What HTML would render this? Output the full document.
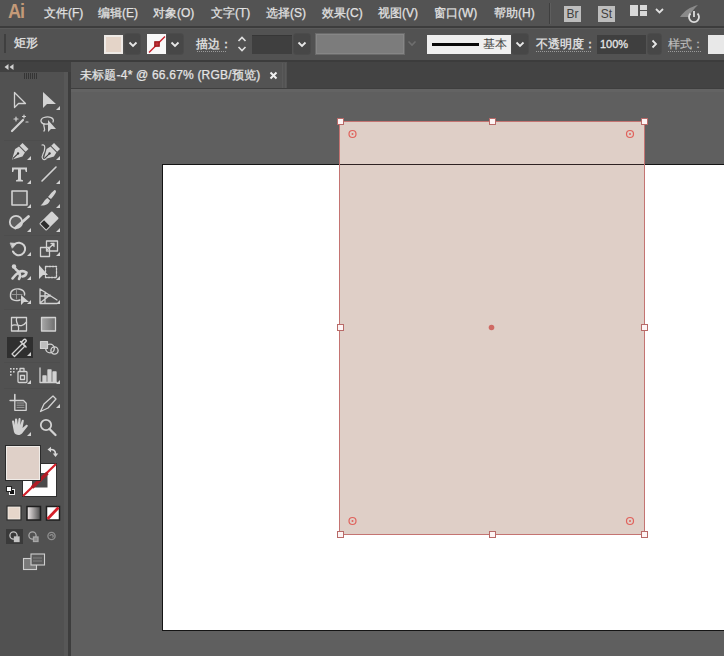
<!DOCTYPE html>
<html><head><meta charset="utf-8">
<style>
*{margin:0;padding:0;box-sizing:border-box}
html,body{width:724px;height:656px;overflow:hidden;background:#5f5f5f;font-family:"Liberation Sans",sans-serif;}
.a{position:absolute}
#menubar{left:0;top:0;width:724px;height:26px;background:#535353}
#mline{left:0;top:26px;width:724px;height:2px;background:#3c3c3c}
#mline2{left:0;top:28px;width:724px;height:1px;background:#5a5a5a}
#ctrl{left:0;top:29px;width:724px;height:31px;background:#525252}
#cline{left:0;top:60px;width:724px;height:2px;background:#3c3c3c}
.mi{position:absolute;top:4.5px;font-size:12px;color:#e2e2e2;line-height:17px;white-space:nowrap;-webkit-text-stroke:0.25px #e2e2e2}
.ct{position:absolute;font-size:12px;color:#e6e6e6;line-height:16px;white-space:nowrap;-webkit-text-stroke:0.3px currentColor}
#tools{left:0;top:62px;width:64px;height:594px;background:#515151}
#thead{left:0;top:62px;width:71px;height:10px;background:#414141}
#tedge{left:64px;top:72px;width:4px;height:584px;background:#575757}
#tdark{left:68px;top:72px;width:3px;height:584px;background:#3d3d3d}
#tabstrip{left:71px;top:62px;width:653px;height:27px;background:#434343}
#tab{left:71px;top:62px;width:216px;height:26px;background:#535353}
#artboard{left:162px;top:164px;width:600px;height:467px;background:#fff;border:1px solid #141414}
#rect{left:339px;top:121px;width:306px;height:414px;background:#dfcfc7;border:1px solid #c47472}
.h{position:absolute;width:7px;height:7px;background:#fdf4f4;border:1px solid #b86a68}
.dd{position:absolute;width:15px;height:20px;background:#474747;border-radius:3px;box-shadow:0 0 0 1px #4b4b4b}
svg{position:absolute;overflow:visible}
</style></head><body>
<div id="menubar" class="a"></div>
<div id="mline" class="a"></div>
<div id="mline2" class="a"></div>
<div id="ctrl" class="a"></div>
<div id="cline" class="a"></div>

<!-- menu -->
<div class="a" style="left:8px;top:1px;font-size:20px;font-weight:bold;color:#c49a78;line-height:20px;letter-spacing:-1px;transform:scaleX(0.9);transform-origin:left">Ai</div>
<div class="mi" style="left:44px">文件(F)</div>
<div class="mi" style="left:98px">编辑(E)</div>
<div class="mi" style="left:153px">对象(O)</div>
<div class="mi" style="left:211px">文字(T)</div>
<div class="mi" style="left:266px">选择(S)</div>
<div class="mi" style="left:322px">效果(C)</div>
<div class="mi" style="left:378px">视图(V)</div>
<div class="mi" style="left:434px">窗口(W)</div>
<div class="mi" style="left:494px">帮助(H)</div>
<div class="a" style="left:549px;top:3px;width:1px;height:21px;background:#3f3f3f"></div>
<div class="a" style="left:550px;top:3px;width:1px;height:21px;background:#5e5e5e"></div>
<div class="a" style="left:564px;top:6px;width:17px;height:16px;background:#bdbdbd;color:#404040;font-size:12px;line-height:16px;text-align:center">Br</div>
<div class="a" style="left:598px;top:6px;width:17px;height:16px;background:#bdbdbd;color:#404040;font-size:12px;line-height:16px;text-align:center">St</div>
<svg style="left:630px;top:5px" width="18" height="12"><rect x="0" y="0" width="8" height="11" fill="#d8d8d8"/><rect x="10" y="0" width="7" height="5" fill="#d8d8d8"/><rect x="10" y="6" width="7" height="5" fill="#d8d8d8"/></svg>
<svg style="left:655px;top:8px" width="9" height="6"><path d="M1 1 L4.5 4.5 L8 1" stroke="#e0e0e0" stroke-width="1.8" fill="none"/></svg>
<svg style="left:678px;top:3px" width="26" height="22"><path d="M2 14 C6 8 12 4 20 2 C16 6 13 9 11 14 Z" fill="#8a8a8a"/><path d="M12.5 10.5 A5 5 0 1 0 19.5 10.5" stroke="#dcdcdc" stroke-width="1.8" fill="none"/><path d="M16 8 V14" stroke="#dcdcdc" stroke-width="1.8"/></svg>

<!-- control bar -->
<div class="a" style="left:4px;top:34px;width:2px;height:19px;background:#3f3f3f"></div>
<div class="ct" style="left:14px;top:35px">矩形</div>
<div class="a" style="left:104px;top:35px;width:19px;height:19px;background:#e4d4c8;border:2px solid #eeeae6"></div>
<div class="dd" style="left:125px;top:34px"></div>
<svg style="left:128px;top:41px" width="10" height="7"><path d="M1.5 1.5 L5 5 L8.5 1.5" stroke="#e8e8e8" stroke-width="1.8" fill="none"/></svg>
<svg style="left:147px;top:34px" width="20" height="20"><rect x="0" y="0" width="19" height="20" fill="#f8f8f8"/><path d="M2 18.5 L18 2.5" stroke="#c8202c" stroke-width="1.5"/><rect x="7.8" y="7.8" width="4.4" height="4.4" fill="#c03038" stroke="#9a1418" stroke-width="1.2"/></svg>
<div class="dd" style="left:167px;top:34px;width:16px"></div>
<svg style="left:170px;top:41px" width="10" height="7"><path d="M1.5 1.5 L5 5 L8.5 1.5" stroke="#e8e8e8" stroke-width="1.8" fill="none"/></svg>
<div class="ct" style="left:196px;top:36px">描边：</div>
<svg style="left:236px;top:36px" width="12" height="16"><path d="M2.5 5 L6 1.5 L9.5 5" stroke="#e0e0e0" stroke-width="1.6" fill="none"/><path d="M2.5 11 L6 14.5 L9.5 11" stroke="#e0e0e0" stroke-width="1.6" fill="none"/></svg>
<div class="a" style="left:252px;top:35px;width:40px;height:19px;background:#3f3f3f;border-top:1px solid #363636"></div>
<div class="dd" style="left:294px;top:34px;width:16px"></div>
<svg style="left:297px;top:41px" width="10" height="7"><path d="M1.5 1.5 L5 5 L8.5 1.5" stroke="#e8e8e8" stroke-width="1.8" fill="none"/></svg>
<div class="a" style="left:315px;top:33px;width:90px;height:22px;background:#7c7c7c;border:1px solid #6a6a6a;box-shadow:inset 0 0 0 1px #868686"></div>
<svg style="left:407px;top:40px" width="10" height="7"><path d="M1.5 1.5 L5 5 L8.5 1.5" stroke="#6e6e6e" stroke-width="1.6" fill="none"/></svg>
<div class="a" style="left:427px;top:35px;width:84px;height:19px;background:#efefef"></div>
<div class="a" style="left:432px;top:43px;width:47px;height:3px;background:#0a0a0a"></div>
<div class="a" style="left:483px;top:36px;font-size:12px;color:#444;line-height:16px">基本</div>
<div class="dd" style="left:512px;top:34px;width:16px"></div>
<svg style="left:515px;top:41px" width="10" height="7"><path d="M1.5 1.5 L5 5 L8.5 1.5" stroke="#e8e8e8" stroke-width="1.8" fill="none"/></svg>
<div class="ct" style="left:536px;top:36px">不透明度：</div>
<div class="a" style="left:597px;top:35px;width:49px;height:19px;background:#3f3f3f"></div>
<div class="ct" style="left:600px;top:36px;font-size:11px;color:#e6e6e6">100%</div>
<div class="dd" style="left:648px;top:34px;width:13px"></div>
<svg style="left:651px;top:39px" width="7" height="10"><path d="M1.5 1.5 L5 5 L1.5 8.5" stroke="#e8e8e8" stroke-width="1.8" fill="none"/></svg>
<div class="ct" style="left:668px;top:36px;color:#bdbdbd;-webkit-text-stroke:0.2px #bdbdbd">样式：</div>
<div class="a" style="left:708px;top:35px;width:20px;height:19px;background:#e8e8e8"></div>

<svg style="left:0;top:0" width="724" height="60"><g stroke="#9a9a9a" stroke-width="1" stroke-dasharray="1 1"><path d="M197 51.5 H227"/><path d="M536 51.5 H592"/><path d="M668 51.5 H702"/></g></svg>
<!-- tools panel -->
<div id="tools" class="a"></div>
<div id="thead" class="a"></div>
<div id="tedge" class="a"></div>
<div id="tdark" class="a"></div>
<svg style="left:4px;top:64px" width="10" height="6"><path d="M4.5 0 L0.5 3 L4.5 6 Z M9.5 0 L5.5 3 L9.5 6 Z" fill="#d0d0d0"/></svg>
<svg style="left:24px;top:73px" width="17" height="6"><path d="M0.5 0 V6 M2.5 0 V6 M4.5 0 V6 M6.5 0 V6 M8.5 0 V6 M10.5 0 V6 M12.5 0 V6" stroke="#353535" stroke-width="1"/></svg>


<!-- tool icons -->
<svg style="left:0;top:0" width="66" height="656">
<g fill="none" stroke="#d2d2d2" stroke-width="1.3" stroke-linejoin="round" stroke-linecap="round">
 <!-- selection outline -->
 <path d="M14.5 92.5 L14.5 107.5 L18.5 103.5 L25.5 103.5 Z"/>
 <!-- magic wand -->
 <path d="M12 131 L23 120" stroke-width="2.2"/>
 <path d="M16 117 V121 M14 119 H18 M24 115 V118 M22.5 116.5 H25.5 M26 122 H28" stroke-width="1.2"/>
 <!-- lasso -->
 <path d="M48 124 C40 125 39 119 44 117.5 C49 116 55 118 53 122"/>
 <path d="M44 124 C43 127 46 129 44 131"/>
 <!-- curvature pen curve -->
 <path d="M42 145 C46 144 45 150 43 154 C41 158 43 161 46 159" stroke-width="1.2"/>
 <!-- line -->
 <path d="M42 181 L56 167" stroke-width="1.6"/>
 <!-- rectangle -->
 <rect x="12" y="191" width="15" height="14" fill="#5c5c5c" stroke-width="1.6"/>
 <!-- shaper -->
 <circle cx="16" cy="222" r="6.2" stroke-width="1.8" fill="#5e5e5e"/>
 <path d="M15.5 228 L28.5 216.5" stroke-width="2.8"/>
 <!-- rotate -->
 <path d="M14.5 244.3 A6.3 6.3 0 1 1 13 251.5" stroke-width="2"/>
 <path d="M10.5 243 L16.5 243.5 L12.5 248 Z" fill="#d2d2d2" stroke-width="0.8"/>
 <!-- scale -->
 <rect x="40.5" y="247.5" width="9" height="9" stroke-width="1.3"/>
 <rect x="46.5" y="241" width="11" height="10" stroke-width="1.3"/>
 <path d="M47 250 L54 243.5 M51 243.5 H54 V246.5" stroke-width="1.3"/>
 <!-- warp -->
 <g stroke="#d2d2d2" stroke-width="2.6" stroke-linecap="round" fill="none"><path d="M13.5 266.5 Q16 270 19 272 Q23 270 26.5 272.5 Q26 276 22.5 276.5 M19 272 Q15 275 12.5 278.5 M19 272 Q21 276 19 279"/></g>
 <circle cx="14" cy="266.5" r="2.2" fill="#d2d2d2" stroke="none"/>
 <!-- free transform -->
 <rect x="45.5" y="266.5" width="11" height="11" stroke-dasharray="2 1.2"/>
 <!-- perspective grid -->
 <path d="M40 289 V303.5 H57 M40 289 L57 300 M40 296 H50 M45 292 V303.5 M40 303 L50 295"/>
 <!-- mesh -->
 <rect x="11.5" y="317.5" width="15" height="13.5"/>
 <path d="M11.5 326 C16 322 20 330 26.5 322 M17 317.5 C14 322 21 326 18 331"/>
 <!-- gradient box -->
 <rect x="41.5" y="317.5" width="14" height="13.5" fill="url(#gr)"/>
 <!-- blend -->
 <circle cx="50" cy="348.5" r="4.3"/><circle cx="54.5" cy="350.5" r="3.6"/>
 <!-- symbol sprayer -->
 <rect x="18" y="371.5" width="9" height="11" rx="1"/>
 <rect x="20.5" y="375.5" width="4" height="4"/>
 <path d="M20 371.5 V368.5 H24 V371.5"/>
 <!-- column graph -->
 <path d="M40 368 V382.5 H57" />
 <rect x="43" y="376" width="3" height="6" fill="#d2d2d2"/>
 <rect x="48" y="370" width="3" height="12" fill="#d2d2d2"/>
 <rect x="53" y="372" width="3" height="10" fill="#d2d2d2"/>
 <!-- artboard -->
 <path d="M14.8 394.5 V399.5" stroke-width="1.6"/>
 <path d="M10 400.5 H23.5 L26.2 403.2 V410.3 H14.8 V400.5" stroke-width="1.3"/>
 <path d="M17 403 H24 M17 405.2 H24 M17 407.4 H24" stroke="#9a9a9a" stroke-width="1"/>
 <!-- slice (knife pencil) -->
 <path d="M40.5 411.5 L44 404 L53 396 L56 399 L48 408 Z"/>
 <!-- zoom -->
 <circle cx="46" cy="425" r="5.2" stroke-width="1.8"/>
 <path d="M49.5 429 L55.5 435" stroke-width="2.3"/>
</g>
<defs><linearGradient id="gr" x1="0" x2="1"><stop offset="0" stop-color="#a8a8a8"/><stop offset="1" stop-color="#6e6e6e"/></linearGradient></defs>
<g fill="#d2d2d2">
 <!-- direct selection filled -->
 <path d="M43 92 L43 108 L47 104 L56 104 Z"/>
 <!-- lasso arrow -->
 <path d="M48 120 L48 132 L51 129 L56 129 Z"/>
 <!-- paintbrush -->
 <path d="M55 190 C57 191 56 193 51 199 L48 197 C52 192 54 190 55 190 Z"/>
 <path d="M47.5 198 L50 200.5 C49 204 45 206 40.5 205.5 C43 204 44 200 47.5 198 Z"/>
 <!-- eraser -->
 <g transform="translate(49 221) rotate(-45)"><rect x="-9" y="-5" width="18" height="10" rx="1"/><rect x="-8" y="-4" width="5" height="8" fill="#2e2e2e"/></g>
 <!-- pen nibs -->
 <g transform="translate(19.5 152) rotate(45)"><path d="M0 10.5 L-5.2 1 L-4.2 -3.5 L4.2 -3.5 L5.2 1 Z"/><rect x="-4.2" y="-8.5" width="8.4" height="4"/><path d="M0 9.5 V2.5" stroke="#3a3a3a" stroke-width="1.1"/><circle cx="0" cy="2" r="1.2" fill="#3a3a3a"/></g>
 <g transform="translate(51 152) rotate(45)"><path d="M0 10.5 L-5.2 1 L-4.2 -3.5 L4.2 -3.5 L5.2 1 Z"/><rect x="-4.2" y="-8.5" width="8.4" height="4"/><path d="M0 9.5 V2.5" stroke="#3a3a3a" stroke-width="1.1"/><circle cx="0" cy="2" r="1.2" fill="#3a3a3a"/></g>
 <!-- free transform arrow -->
 <path d="M39 265 L39 279 L43 275 L48 275 Z"/>

 <!-- shape builder arrow -->
 <path d="M21 295 L21 305 L24 302 L29 302 Z"/>
 <!-- eyedropper bg -->
</g>
<rect x="7" y="337" width="26" height="21" fill="#2f2f2f"/>
<g fill="none" stroke="#d2d2d2" stroke-linecap="round" stroke-linejoin="round">
 <path d="M12 354 L22.5 343.5 L25 346 L14.5 356.5 Z" stroke-width="1.3"/>
 <path d="M21.5 342 L24 339.5 C25 338.5 27 340.5 26 341.5 L23.5 344 M20.5 341.5 L26 347" stroke-width="1.5"/>
 <!-- shape builder blob -->
 <path d="M20 300 C15 301.5 10 300 10.5 295 C10.5 290 15 288.5 19 289 C23 289.5 25 292 24.5 295" stroke-width="1.4"/>
 <path d="M12 294.5 H22 M16.5 290 V299" stroke-width="0.9" stroke="#9a9a9a"/>
 <!-- blend squares -->
 <rect x="40.5" y="341.5" width="7" height="7" stroke-width="1.2" fill="#bdbdbd"/>
</g>
<g fill="#d2d2d2">
 <rect x="10" y="368" width="1.6" height="1.6"/><rect x="13" y="368" width="1.6" height="1.6"/><rect x="16" y="368" width="1.6" height="1.6"/>
 <rect x="10" y="371" width="1.6" height="1.6"/><rect x="13" y="371" width="1.6" height="1.6"/>
 <rect x="10" y="374" width="1.6" height="1.6"/>
 <!-- hand -->
 <path d="M13 427 L12 421.5 C12 420 14 420 14.3 421.5 L15 425 L15 419.5 C15 418 17 418 17.2 419.5 L17.8 424.5 L18.5 419 C18.7 417.7 20.7 417.8 20.6 419.3 L20.3 425 L21.8 420.5 C22.2 419.2 24 419.6 23.8 421 L22.5 428 L26 425 C27 424 28.5 425.3 27.5 426.5 L22 433.5 C20.5 435.5 15.5 436 14 432 Z"/>
 <!-- T -->
 <path d="M12 167.5 H27 V172 H25.8 L25 169.6 H21 V179.6 L23 180.2 V181.5 H16 V180.2 L18 179.6 V169.6 H14 L13.2 172 H12 Z"/>
 <!-- corner triangles -->
 <path d="M60 106 V110 H56 Z M31 156 V160 H27 Z M60 156 V160 H56 Z M31 180 V184 H27 Z M60 180 V184 H56 Z M31 204 V208 H27 Z M60 204 V208 H56 Z M31 228 V232 H27 Z M60 228 V232 H56 Z M31 252 V256 H27 Z M60 252 V256 H56 Z M31 276 V280 H27 Z M60 276 V280 H56 Z M31 300 V304 H27 Z M60 300 V304 H56 Z M31 352 V356 H27 Z M31 380 V384 H27 Z M60 380 V384 H56 Z M60 404 V408 H56 Z M31 432 V436 H27 Z"/>
</g>
<!-- separators -->
<g fill="#4d4d4d"><rect x="4" y="140" width="56" height="1"/><rect x="4" y="235" width="56" height="1"/><rect x="4" y="309" width="56" height="1"/><rect x="4" y="362" width="56" height="1"/><rect x="4" y="388" width="56" height="1"/></g>

<!-- fill / stroke widget -->
<rect x="22.5" y="463.5" width="34" height="33" fill="#fff" stroke="#303030"/>
<path d="M23 496 L56 464" stroke="#d4202a" stroke-width="2.2"/>
<rect x="32" y="473" width="15.5" height="14.5" fill="#4a4a4a"/>
<path d="M32 487.5 L47.5 473" stroke="#b01c24" stroke-width="3.5"/>
<rect x="5.5" y="445.5" width="35" height="35" fill="#2a2a2a" stroke="#2a2a2a"/>
<rect x="6.5" y="446.5" width="33" height="33" fill="#dfd0c8" stroke="#f0ece8"/>
<path d="M50 449.5 Q55.5 449 55.5 454" stroke="#d8d8d8" stroke-width="1.6" fill="none"/><path d="M47.5 449.5 L51 446.8 L51 452.2 Z M55.5 457 L52.8 453.5 L58.2 453.5 Z" fill="#d8d8d8"/>
<rect x="9.5" y="489.5" width="5" height="5" fill="#111" stroke="#eee"/>
<rect x="6.5" y="486.5" width="5" height="5" fill="#fff" stroke="#222"/>
<!-- color / gradient / none -->
<rect x="6.5" y="505.5" width="15" height="15" fill="#2a2a2a"/>
<rect x="8" y="507" width="12" height="12" fill="#e6d6ca" stroke="#f4efe9" stroke-width="0.8"/>
<rect x="27" y="506.5" width="13.5" height="13.5" fill="url(#gr2)" stroke="#1e1e1e" stroke-width="1.5"/>
<defs><linearGradient id="gr2" x1="0" x2="1"><stop offset="0" stop-color="#f4eeee"/><stop offset="1" stop-color="#4a4a4a"/></linearGradient></defs>
<rect x="46.5" y="506.5" width="13" height="13.5" fill="#fff" stroke="#1e1e1e" stroke-width="1.5"/>
<path d="M47.5 519 L58.5 507.5" stroke="#d4202a" stroke-width="2.8"/>
<!-- draw modes -->
<rect x="6" y="529" width="17" height="15" fill="#3a3a3a"/>
<g fill="none" stroke="#c4c4c4" stroke-width="1.3">
 <circle cx="13.5" cy="535.5" r="3.6"/><rect x="14.5" y="537" width="4.5" height="4.5" fill="#c4c4c4"/>
 <circle cx="32.5" cy="535.5" r="3.6" stroke="#a8a8a8"/><rect x="33.5" y="537" width="4.5" height="4.5" fill="#8a8a8a" stroke="#a8a8a8"/>
 <circle cx="51.5" cy="536" r="3.6" stroke="#909090"/><path d="M50 536 A1.6 1.6 0 1 1 52.5 537.5" stroke="#909090"/>
</g>
<!-- screen mode -->
<g fill="none" stroke="#cfcfcf" stroke-width="1.1">
 <rect x="23.5" y="558.5" width="13" height="11" fill="#7a7a7a"/>
 <rect x="31" y="554" width="13.5" height="11" fill="#5a5a5a"/>
 <path d="M33 558 H42 M33 561 H42" stroke="#8a8a8a" stroke-width="0.8"/>
</g>
</svg>

<div id="tabstrip" class="a"></div>
<div id="tab" class="a"></div>
<div class="a" style="left:80px;top:67px;font-size:12px;color:#e4e4e4;line-height:16px;white-space:nowrap;letter-spacing:0.2px;-webkit-text-stroke:0.25px #e4e4e4">未标题-4* @ 66.67% (RGB/预览)</div>
<svg style="left:269px;top:71px" width="9" height="9"><path d="M1.5 1.5 L7.5 7.5 M7.5 1.5 L1.5 7.5" stroke="#f0f0f0" stroke-width="2"/></svg>
<div class="a" style="left:282px;top:63px;width:1px;height:25px;background:#5a5a5a"></div><div class="a" style="left:285px;top:63px;width:1px;height:25px;background:#5a5a5a"></div>
<div class="a" style="left:71px;top:88px;width:653px;height:1px;background:#3e3e3e"></div><div class="a" style="left:71px;top:89px;width:653px;height:3px;background:#636363"></div>

<div id="artboard" class="a"></div>
<div id="rect" class="a"></div>
<div class="a" style="left:340px;top:164px;width:304px;height:1px;background:#2e2222"></div>
<div class="h" style="left:337px;top:118px"></div>
<div class="h" style="left:489px;top:118px"></div>
<div class="h" style="left:641px;top:118px"></div>
<div class="h" style="left:337px;top:324px"></div>
<div class="h" style="left:641px;top:324px"></div>
<div class="h" style="left:337px;top:531px"></div>
<div class="h" style="left:489px;top:531px"></div>
<div class="h" style="left:641px;top:531px"></div>
<svg style="left:0;top:0" width="724" height="656">
 <g fill="none" stroke="#e0625c" stroke-width="1.2">
  <circle cx="352.5" cy="134" r="3.5"/><circle cx="630" cy="134" r="3.5"/>
  <circle cx="352.5" cy="521" r="3.5"/><circle cx="630" cy="521" r="3.5"/>
 </g>
 <g fill="#e0625c"><circle cx="352.5" cy="134" r="1"/><circle cx="630" cy="134" r="1"/><circle cx="352.5" cy="521" r="1"/><circle cx="630" cy="521" r="1"/>
 <circle cx="491.5" cy="327.5" r="2.8" fill="#cf6a64"/></g>
</svg>
</body></html>
